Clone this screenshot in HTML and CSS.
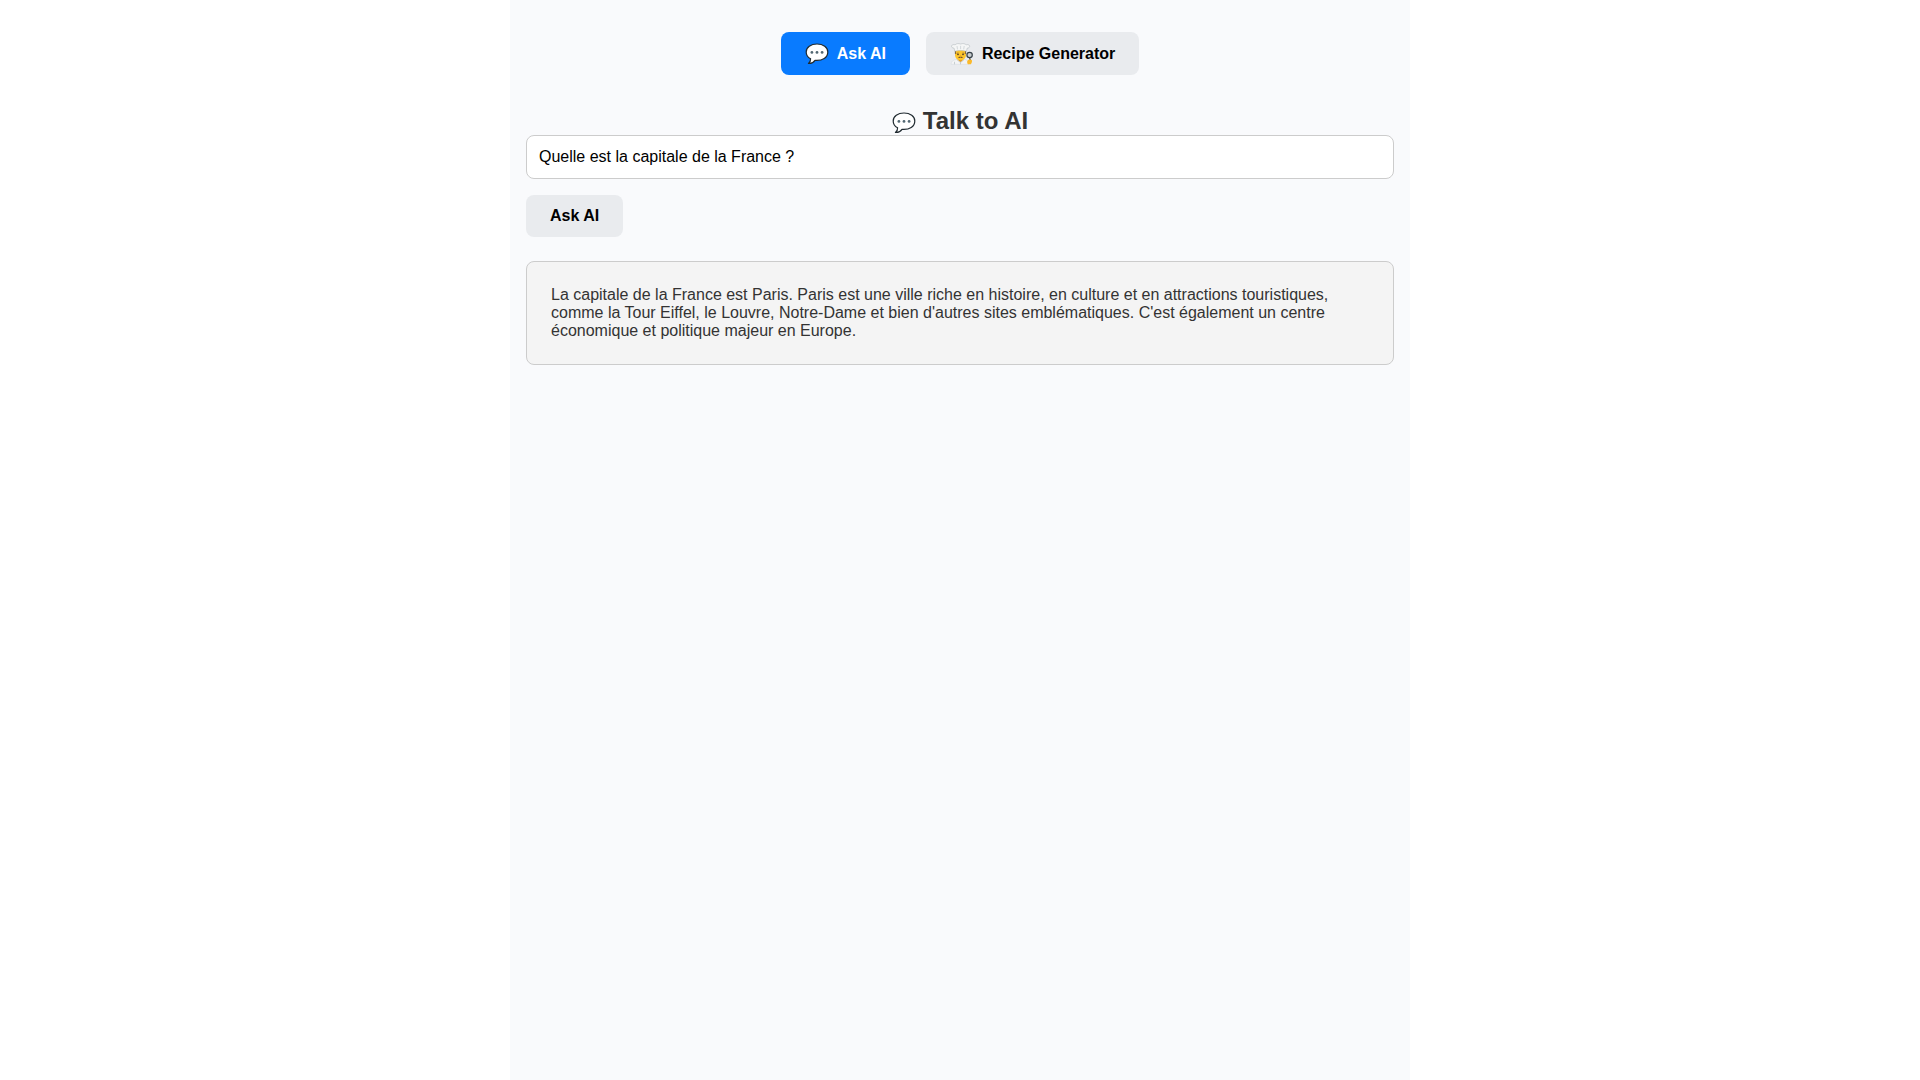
FILE: index.html
```
<!DOCTYPE html>
<html lang="fr">
<head>
<meta charset="utf-8">
<meta name="viewport" content="width=device-width, initial-scale=1">
<title>Talk to AI</title>
<link rel="stylesheet" href="styles.css">
</head>
<body>
<svg class="sprite" aria-hidden="true">
  <symbol id="bubble" viewBox="0 0 24 24">
    <path d="M12 2C5.800 2 1.200 5.300 1.200 9.900c0 3 1.600 5.400 4.400 6.900.1 2-.6 3.600-2.200 4.700 3 .2 5.300-1.200 6.600-3.200 7.500.7 12.800-2.900 12.800-8.400C22.800 5.300 18.200 2 12 2z" fill="#fff" stroke="#202a30" stroke-width="1.200" stroke-linejoin="round"/>
    <g fill="#536873"><circle cx="6.900" cy="10.400" r="1.400"/><circle cx="12" cy="10.400" r="1.400"/><circle cx="17.100" cy="10.400" r="1.400"/></g>
  </symbol>
  <symbol id="chef" viewBox="0 0 24 24">
    <path d="M1 22.300c.2-3 2-4.400 5.600-4.900h7.800c2.300.3 3.700 1.300 4.200 4.900z" fill="#f3f4f5" stroke="#cfd5d8" stroke-width=".4"/>
    <path d="M6.800 17.600l3.700 2.900 3.700-2.900M10.500 20.500v1.800M4.500 19.800v2.500" fill="none" stroke="#b5bec3" stroke-width=".7"/>
    <path d="M8.500 16h4v2.500l-2 1.600-2-1.600z" fill="#e59b20"/>
    <path d="M5 9.500h11v3.300c0 3.500-2.500 5.500-5.500 5.500S5 16.300 5 12.800z" fill="#fcc52c"/>
    <path d="M4.900 8.500h1.300v3.200H4.900zM14.800 8.500h1.300v3.200h-1.300z" fill="#65503f"/>
    <path d="M5.800 8h9.400v3H5.800z" fill="#fcc52c"/>
    <path d="M4.700 9.300L4.100 6.200C2.100 6 1.200 5 1.600 3.800c.4-1.200 2.200-1.500 3.500-1 1-1.200 3.300-1.600 5.500-.8 2.200-.8 4.500-.4 5.500.8 1.300-.5 3.100-.2 3.500 1 .4 1.200-.5 2.200-2.400 2.400l-.7 3.100c-3-1-8.800-1-11.800 0z" fill="#f5f6f6" stroke="#a9b1b5" stroke-width=".5"/>
    <path d="M7 4l.5 3.400M10.600 3.800v3.400M14.200 4l-.5 3.400" stroke="#c4cbcf" stroke-width=".7"/>
    <path d="M6.900 11.200h1.800M12.300 11.200h1.800" stroke="#67482f" stroke-width=".6"/>
    <circle cx="8" cy="12.500" r=".8" fill="#403028"/><circle cx="13" cy="12.500" r=".8" fill="#403028"/>
    <path d="M9.900 14h1.200" stroke="#d28a18" stroke-width=".7"/>
    <path d="M8 15.600c.8-.9 1.800-.9 2.500-.4.700-.5 1.700-.5 2.500.4-1 .5-1.900.4-2.500 0-.6.400-1.500.5-2.500 0z" fill="#67482f"/>
    <circle cx="19.600" cy="13" r="2.700" fill="#c8ced1" stroke="#384249" stroke-width="1.200"/>
    <path d="M19.700 15.800l.6 3" stroke="#384249" stroke-width="1.200"/>
    <path d="M17.400 18.700c.8-1.100 3.200-1.600 4.300-.6.700.7.200 2.900-.8 4.200h-3c-.8-1.300-.9-2.600-.5-3.600z" fill="#fbb92a"/>
  </symbol>
</svg>
<main class="app">
  <nav class="tabs">
    <button class="btn tab active" type="button"><svg class="icon" aria-hidden="true"><use href="#bubble"/></svg>Ask AI</button>
    <button class="btn tab" type="button"><svg class="icon" aria-hidden="true"><use href="#chef"/></svg>Recipe Generator</button>
  </nav>
  <form class="chat">
    <h2 class="title"><svg class="icon title-icon" aria-hidden="true"><use href="#bubble"/></svg>Talk to AI</h2>
    <input class="prompt" type="text" aria-label="Question" value="Quelle est la capitale de la France ?">
    <button class="btn" type="button">Ask AI</button>
  </form>
  <section class="answer">
    <p class="answer-text">La capitale de la France est Paris. Paris est une ville riche en histoire, en culture et en attractions touristiques, comme la Tour Eiffel, le Louvre, Notre-Dame et bien d'autres sites emblématiques. C'est également un centre économique et politique majeur en Europe.</p>
  </section>
</main>
</body>
</html>
```
FILE: styles.css
```
* {
  box-sizing: border-box;
}

body {
  margin: 0;
  background: #fff;
  color: #333;
  font: 16px/18px "Liberation Sans", Arial, sans-serif;
}

.sprite {
  display: none;
}

.app {
  max-width: 900px;
  min-height: 100vh;
  margin: 0 auto;
  padding: 32px 16px 16px;
  background: #f9fafc;
}

.tabs {
  display: flex;
  flex-wrap: wrap;
  justify-content: center;
  gap: 16px;
  margin-bottom: 32px;
}

.btn {
  padding: 12px 24px;
  border: 0;
  border-radius: 8px;
  background: #e9ebee;
  color: #000;
  font: inherit;
  font-weight: bold;
  cursor: pointer;
}

.tab {
  display: flex;
  align-items: center;
  gap: 8px;
  height: 43px;
}

.active {
  background: #097bff;
  color: #fff;
}

.icon {
  flex: none;
  width: 24px;
  height: 24px;
}

.chat {
  display: flex;
  flex-direction: column;
  align-items: flex-start;
}

.title {
  display: flex;
  align-items: center;
  align-self: center;
  gap: 7px;
  margin: 0;
  font-size: 24px;
  line-height: 28px;
}

.title-icon {
  align-self: flex-end;
}

.prompt {
  width: 100%;
  height: 44px;
  margin-bottom: 16px;
  padding: 12px;
  border: 1px solid #ccc;
  border-radius: 8px;
  background: #fff;
  color: #000;
  font: inherit;
}

.answer {
  margin-top: 24px;
  padding: 24px;
  border: 1px solid #ccc;
  border-radius: 8px;
  background: #f4f4f4;
}

.answer-text {
  margin: 0;
}
```
